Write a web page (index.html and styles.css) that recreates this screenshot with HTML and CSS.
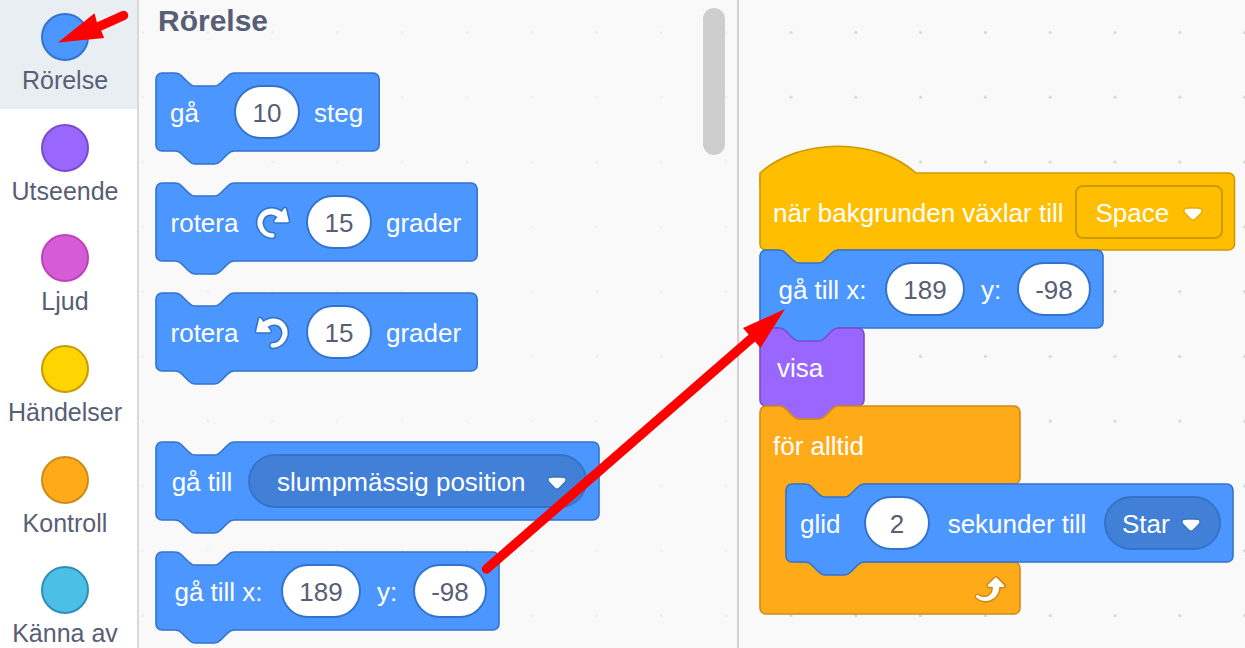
FILE: index.html
```html
<!DOCTYPE html>
<html lang="sv">
<head>
<meta charset="utf-8">
<meta name="viewport" content="width=device-width, initial-scale=1">
<title>Rörelse</title>
<link rel="stylesheet" href="styles.css">
</head>
<body>
<svg class="defs" aria-hidden="true">
  <symbol id="block" class="open">
    <rect class="body" width="100%" height="100%" rx="6"/>
    <svg class="open" width="78" height="13" viewBox="0 0 48 8">
      <path class="above" d="M12-.8V0c2 0 3 1 4 2l4 4c1 1 2 2 4 2h12c2 0 3-1 4-2l4-4c1-1 2-2 4-2V-.8z"/>
      <path class="line" d="M12 0c2 0 3 1 4 2l4 4c1 1 2 2 4 2h12c2 0 3-1 4-2l4-4c1-1 2-2 4-2"/>
    </svg>
    <svg class="open" y="100%" width="78" height="13" viewBox="0 0 48 8">
      <path class="fill" d="M12-.8V0c2 0 3 1 4 2l4 4c1 1 2 2 4 2h12c2 0 3-1 4-2l4-4c1-1 2-2 4-2V-.8z"/>
      <path class="line" d="M12 0c2 0 3 1 4 2l4 4c1 1 2 2 4 2h12c2 0 3-1 4-2l4-4c1-1 2-2 4-2"/>
    </svg>
  </symbol>
  <symbol id="hat" class="open">
    <rect class="body" width="100%" height="100%" rx="6"/>
    <svg class="open" width="156" height="26" viewBox="0 0 96 16">
      <path class="fill" d="M0 8V0c25-22 71-22 96 0v.6H8V8z"/>
      <path class="line" d="M0 8V0c25-22 71-22 96 0"/>
    </svg>
  </symbol>
  <symbol id="loop-shape" class="open" viewBox="0 0 260 208" preserveAspectRatio="none">
    <path class="body" d="M0 6a6 6 0 0 1 6-6H20c3 0 5 2 6 3l7 7c2 2 3 3 6 3h20c3 0 5-2 6-3l7-7c2-2 3-3 6-3H254a6 6 0 0 1 6 6V72a6 6 0 0 1-6 6H36V156H254a6 6 0 0 1 6 6V202a6 6 0 0 1-6 6H6a6 6 0 0 1-6-6z"/>
    <path class="above" d="M20-1V0c3 0 5 2 6 3l7 7c2 2 3 3 6 3h20c3 0 5-2 6-3l7-7c2-2 3-3 6-3V-1z"/>
    <path class="loop-line" d="M20 0c3 0 5 2 6 3l7 7c2 2 3 3 6 3h20c3 0 5-2 6-3l7-7c2-2 3-3 6-3"/>
  </symbol>
  <symbol id="turn" viewBox="0 0 24 24">
    <path class="turn-edge" d="M22.68,12.2a1.6,1.6,0,0,1-1.27.63H13.72a1.59,1.59,0,0,1-1.16-2.58l1.12-1.41a4.82,4.82,0,0,0-3.14-.77,4.31,4.31,0,0,0-2,.8,4.25,4.25,0,0,0-1.34,1.73,5.06,5.06,0,0,0,.54,4.62A5.58,5.58,0,0,0,12,17.74h0a2.26,2.26,0,0,1-.16,4.52A10.25,10.25,0,0,1,3.74,18,10.14,10.14,0,0,1,2.25,8.78,9.7,9.7,0,0,1,5.08,4.64,9.92,9.92,0,0,1,9.66,2.5a10.66,10.66,0,0,1,7.72,1.68l1.08-1.35a1.57,1.57,0,0,1,1.24-.6,1.6,1.6,0,0,1,1.54,1.21l1.7,7.37A1.57,1.57,0,0,1,22.68,12.2Z"/>
    <path fill="#fff" d="M21.38,11.83H13.77a.59.59,0,0,1-.43-1l1.75-2.19a5.9,5.9,0,0,0-4.7-1.58,5.07,5.07,0,0,0-4.11,3.17A6,6,0,0,0,7,15.77a6.51,6.51,0,0,0,5,2.92,1.31,1.31,0,0,1-.08,2.62,9.3,9.3,0,0,1-7.35-3.82A9.16,9.16,0,0,1,3.17,9.12,8.51,8.51,0,0,1,5.71,5.4,8.76,8.76,0,0,1,9.82,3.48a9.71,9.71,0,0,1,7.75,2.07l1.67-2.1a.59.59,0,0,1,1,.21L22,11.08A.59.59,0,0,1,21.38,11.83Z"/>
  </symbol>
  <symbol id="caret" viewBox="0 0 12.71 8.79">
    <path fill="#231f20" opacity=".1" d="M12.71,2.44A2.41,2.41,0,0,1,12,4.16L8.08,8.08a2.45,2.45,0,0,1-3.45,0L.72,4.16A2.42,2.42,0,0,1,0,2.44,2.48,2.48,0,0,1,.71.71C1,.47,1.43,0,6.36,0S11.75.46,12,.71A2.44,2.44,0,0,1,12.71,2.44Z"/>
    <path fill="#fff" d="M6.36,7.79a1.43,1.43,0,0,1-1-.42L1.42,3.45a1.44,1.44,0,0,1,0-2c.56-.56,9.31-.56,9.87,0a1.44,1.44,0,0,1,0,2L7.37,7.37A1.43,1.43,0,0,1,6.36,7.79Z"/>
  </symbol>
</svg>

<svg class="dots" aria-hidden="true">
  <defs>
    <pattern id="grid" width="27" height="27" patternUnits="userSpaceOnUse" patternTransform="translate(110.6 0) scale(2.4)">
      <circle cx="13.5" cy="13.5" r=".65" fill="#d6d6d6"/>
    </pattern>
  </defs>
  <rect width="100%" height="100%" fill="url(#grid)"/>
</svg>

<nav class="categories" aria-label="Kategorier">
  <button class="category motion active" type="button"><span class="dot"></span>Rörelse</button>
  <button class="category looks" type="button"><span class="dot"></span>Utseende</button>
  <button class="category sound" type="button"><span class="dot"></span>Ljud</button>
  <button class="category events-menu" type="button"><span class="dot"></span>Händelser</button>
  <button class="category control" type="button"><span class="dot"></span>Kontroll</button>
  <button class="category sensing" type="button"><span class="dot"></span>Känna av</button>
</nav>

<section class="palette">
  <div class="palette-list">
    <h1 class="heading">Rörelse</h1>
    <div class="group">
      <div class="block motion">
        <svg class="shape"><use href="#block" width="100%" height="100%"/></svg>
        <span class="label start">gå</span>
        <input class="number w2" type="text" value="10" aria-label="steg">
        <span class="label">steg</span>
      </div>
      <div class="block motion">
        <svg class="shape"><use href="#block" width="100%" height="100%"/></svg>
        <span class="label rotate">rotera</span>
        <svg class="icon"><use href="#turn"/></svg>
        <input class="number w2" type="text" value="15" aria-label="grader höger">
        <span class="label">grader</span>
      </div>
      <div class="block motion">
        <svg class="shape"><use href="#block" width="100%" height="100%"/></svg>
        <span class="label rotate">rotera</span>
        <svg class="icon flip"><use href="#turn"/></svg>
        <input class="number w2" type="text" value="15" aria-label="grader vänster">
        <span class="label">grader</span>
      </div>
    </div>
    <div class="group">
      <div class="block motion ends-in-field">
        <svg class="shape"><use href="#block" width="100%" height="100%"/></svg>
        <span class="label goto">gå till</span>
        <span class="drop round wide">
          <select aria-label="gå till"><option>slumpmässig position</option></select>
          <svg class="caret"><use href="#caret"/></svg>
        </span>
      </div>
      <div class="block motion ends-in-field">
        <svg class="shape"><use href="#block" width="100%" height="100%"/></svg>
        <span class="label goto-x">gå till x:</span>
        <input class="number w3" type="text" value="189" aria-label="x">
        <span class="label axis">y:</span>
        <input class="number wneg" type="text" value="-98" aria-label="y">
      </div>
    </div>
  </div>
  <div class="scrollbar"></div>
</section>

<main class="workspace">
  <div class="script">
    <div class="block events ends-in-field hat">
      <svg class="shape"><use href="#hat" width="100%" height="100%"/></svg>
      <span class="label">när bakgrunden växlar till</span>
      <span class="drop square">
        <select aria-label="bakgrund"><option>Space</option></select>
        <svg class="caret"><use href="#caret"/></svg>
      </span>
    </div>
    <div class="block motion under-events ends-in-field">
      <svg class="shape"><use href="#block" width="100%" height="100%"/></svg>
      <span class="label goto-x">gå till x:</span>
      <input class="number w3" type="text" value="189" aria-label="x">
      <span class="label axis">y:</span>
      <input class="number wneg" type="text" value="-98" aria-label="y">
    </div>
    <div class="block looks under-motion short">
      <svg class="shape"><use href="#block" width="100%" height="100%"/></svg>
      <span class="label">visa</span>
    </div>
    <div class="loop control under-looks">
      <svg class="shape"><use href="#loop-shape" width="100%" height="100%"/></svg>
      <div class="loop-head"><span class="label">för alltid</span></div>
      <div class="loop-mouth">
        <div class="block motion under-control ends-in-field">
          <svg class="shape"><use href="#block" width="100%" height="100%"/></svg>
          <span class="label start">glid</span>
          <input class="number w2" type="text" value="2" aria-label="sekunder">
          <span class="label seconds">sekunder till</span>
          <span class="drop round">
            <select aria-label="glid till"><option>Star</option></select>
            <svg class="caret"><use href="#caret"/></svg>
          </span>
        </div>
      </div>
      <div class="loop-foot">
        <svg class="icon" viewBox="0 0 24 24">
          <path fill="#cf8b17" d="M23.3,11c-0.3,0.6-0.9,1-1.5,1h-1.6c-0.1,1.3-0.5,2.5-1.1,3.6c-0.9,1.7-2.3,3.2-4.1,4.1c-1.7,0.9-3.6,1.2-5.5,0.9c-1.8-0.3-3.5-1.1-4.9-2.3c-0.7-0.7-0.7-1.9,0-2.6c0.6-0.6,1.6-0.7,2.3-0.2H7c0.9,0.6,1.9,0.9,2.9,0.9s1.9-0.3,2.7-0.9c1.1-0.8,1.8-2.1,1.8-3.5h-1.5c-0.9,0-1.7-0.7-1.7-1.7c0-0.4,0.2-0.9,0.5-1.2l4.4-4.4c0.7-0.6,1.7-0.6,2.4,0L23,9.2C23.5,9.7,23.6,10.4,23.3,11z"/>
          <path fill="#fff" d="M21.8,11h-2.6c0,1.5-0.3,2.9-1,4.2c-0.8,1.6-2.1,2.8-3.7,3.6c-1.5,0.8-3.3,1.1-4.9,0.8c-1.6-0.2-3.2-1-4.4-2.1c-0.4-0.3-0.4-0.9-0.1-1.2c0.3-0.4,0.9-0.4,1.2-0.1l0,0c1,0.7,2.2,1.1,3.4,1.1s2.3-0.3,3.3-1c0.9-0.6,1.6-1.5,2-2.6c0.3-0.9,0.4-1.8,0.2-2.8h-2.4c-0.4,0-0.7-0.3-0.7-0.7c0-0.2,0.1-0.3,0.2-0.4l4.4-4.4c0.3-0.3,0.7-0.3,0.9,0L22,9.8c0.3,0.3,0.4,0.6,0.3,0.9S22,11,21.8,11z"/>
        </svg>
      </div>
    </div>
  </div>
</main>

<svg class="arrows" width="1245" height="648" aria-hidden="true">
  <path class="shaft" d="M98 27L123.500 15.500M486.500 569L760 331"/>
  <path class="head" d="M58 42.500L94.500 13.300 97 22.500 101.500 31.500 104.200 38z"/>
  <path class="head" d="M785 309L743 328 749 335 754.500 341 760.500 348z"/>
</svg>
</body>
</html>
```
FILE: styles.css
```css
* {
  box-sizing: border-box;
}

body {
  position: relative;
  display: flex;
  height: 100vh;
  margin: 0;
  overflow: hidden;
  background: #f9f9f9;
  color: #575e75;
  font-family: "Liberation Sans", Arial, sans-serif;
  font-size: 26px;
  line-height: 30px;
}

.defs {
  position: absolute;
  width: 0;
  height: 0;
}

.dots {
  position: absolute;
  z-index: -1;
  width: 100%;
  height: 100%;
}

.motion {
  --fill: #4c97ff;
  --edge: #3373cc;
  --field: #4280d7;
}

.looks {
  --fill: #9966ff;
  --edge: #774dcb;
}

.sound {
  --fill: #d65cd6;
  --edge: #bd42bd;
}

.events-menu {
  --fill: #ffd500;
  --edge: #cc9900;
}

.events {
  --fill: #ffbf00;
  --edge: #cc9900;
  --field: #ffbf00;
}

.control {
  --fill: #ffab19;
  --edge: #cf8b17;
}

.sensing {
  --fill: #4cbfe6;
  --edge: #2e8eb8;
}

.under-events {
  --above: #ffbf00;
}

.under-motion {
  --above: #4c97ff;
}

.under-looks {
  --above: #9966ff;
}

.under-control {
  --above: #ffab19;
}

.categories {
  display: grid;
  grid-auto-rows: 1fr;
  flex: none;
  width: 139px;
  height: calc(100vh + 16px);
  margin-top: -2px;
  border-right: 2px solid #d9d9d9;
  background: #fff;
}

.category {
  display: flex;
  flex-direction: column;
  align-items: center;
  gap: 4px;
  padding: 15px 7px 0 0;
  border: 0;
  background: none;
  color: inherit;
  font: inherit;
  font-size: 25px;
  white-space: nowrap;
}

.category.active {
  background: #e9eef2;
}

.dot {
  width: 48px;
  height: 48px;
  border: 2px solid var(--edge);
  border-radius: 50%;
  background: var(--fill);
}

.palette {
  display: flex;
  flex: none;
  justify-content: space-between;
  width: 600px;
  padding: 6px 12px 0 17px;
  border-right: 2px solid #d0d0d0;
  background: rgba(249, 249, 249, .7);
}

.palette-list {
  display: flex;
  flex-direction: column;
  gap: 71px;
}

.heading {
  margin: 0 0 -34px 2px;
  font-size: 30px;
  line-height: 30px;
}

.group {
  display: flex;
  flex-direction: column;
  align-items: flex-start;
  gap: 32px;
}

.scrollbar {
  width: 22px;
  height: 147px;
  margin-top: 2px;
  border-radius: 11px;
  background: #cecece;
}

.block {
  position: relative;
  display: flex;
  align-items: center;
  gap: 14px;
  height: 78px;
  padding: 0 16px 0 14px;
  color: #fff;
}

.block.ends-in-field {
  padding-right: 12px;
}

.block.hat {
  gap: 11px;
  height: 77px;
  padding-top: 1px;
  padding-left: 13px;
}

.block.short {
  min-width: 104px;
  padding-left: 17px;
}

.shape {
  position: absolute;
  top: 0;
  left: 0;
  width: 100%;
  height: 100%;
  overflow: visible;
}

.open {
  overflow: visible;
}

.body {
  fill: var(--fill);
  stroke: var(--edge);
  stroke-width: 1.6;
}

.fill {
  fill: var(--fill);
}

.above {
  fill: var(--above, #f9f9f9);
}

.line {
  fill: none;
  stroke: var(--edge);
}

.loop-line {
  fill: none;
  stroke: var(--edge);
  stroke-width: 1.6;
}

.turn-edge {
  fill: #3373cc;
}

.label,
.number,
.drop,
.icon {
  position: relative;
  flex: none;
}

.label {
  padding-top: 2px;
  text-align: center;
  white-space: nowrap;
}

.label.start {
  min-width: 50px;
  text-align: left;
}

.label.rotate {
  min-width: 69px;
}

.label.goto {
  min-width: 64px;
}

.label.goto-x {
  min-width: 97px;
}

.label.axis {
  min-width: 24px;
}

.label.seconds {
  min-width: 146px;
}

.icon {
  width: 39px;
  height: 39px;
}

.icon.flip {
  transform: scaleX(-1);
}

.number {
  height: 54px;
  padding: 2px 0 0;
  border: 2px solid var(--edge);
  border-radius: 27px;
  background: #fff;
  color: #575e75;
  font: inherit;
  text-align: center;
}

.number.w2 {
  width: 66px;
}

.number.w3 {
  width: 80px;
}

.number.wneg {
  width: 74px;
}

.drop {
  display: grid;
  align-items: center;
}

.drop select {
  grid-area: 1 / 1;
  height: 54px;
  padding: 2px 49px 0 16px;
  border: 2px solid var(--edge);
  border-radius: 27px;
  appearance: none;
  background: var(--field);
  color: #fff;
  font: inherit;
}

.drop.wide select {
  padding: 2px 59px 0 27px;
}

.drop.square select {
  padding: 2px 51px 0 19px;
  border-radius: 8px;
}

.caret {
  grid-area: 1 / 1;
  justify-self: end;
  width: 20px;
  height: 14px;
  margin: 3px 20px 0 0;
  pointer-events: none;
  z-index: 1;
}

.workspace {
  flex: 1;
  min-width: 0;
  padding: 173px 0 0 21px;
}

.script {
  display: flex;
  flex-direction: column;
  align-items: flex-start;
}

.loop {
  position: relative;
  width: 260px;
  color: #fff;
}

.loop-head {
  display: flex;
  align-items: center;
  height: 78px;
  padding-left: 13px;
}

.loop-mouth {
  display: flex;
  padding-left: 26px;
}

.loop-foot {
  display: flex;
  align-items: center;
  justify-content: flex-end;
  height: 52px;
  padding-right: 13px;
}

.arrows {
  position: absolute;
  top: 0;
  left: 0;
  pointer-events: none;
}

.shaft {
  fill: none;
  stroke: #f00;
  stroke-width: 9.5;
  stroke-linecap: round;
}

.head {
  fill: #f00;
}
```
